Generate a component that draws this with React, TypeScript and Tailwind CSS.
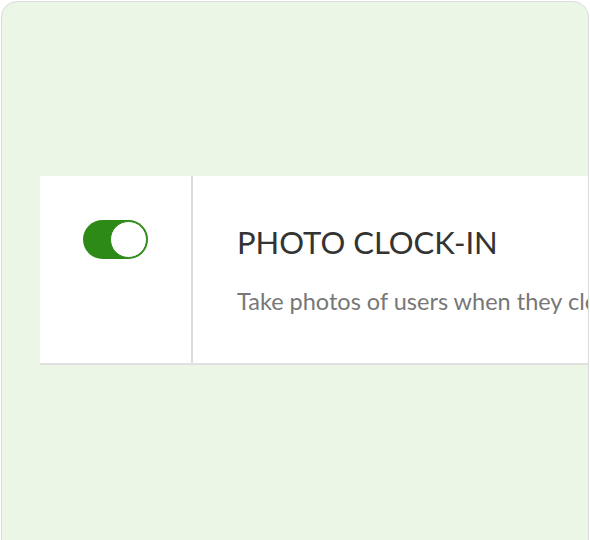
export default function App() {
  return (
    <div className="w-[590px] h-[540px] bg-white overflow-hidden" style={{ fontFamily: 'Lato, "Noto Sans", sans-serif' }}>
      <div className="ml-px mt-px w-[588px] h-[560px] border border-[#dcdcdc] rounded-[16px] bg-[#ecf6e7] overflow-hidden pt-[174px] pl-[38px]">
        <div className="flex w-[620px] bg-white border-b-2 border-[#e0e0e0] h-[189px]">
          <div className="w-[151px] shrink-0 flex justify-center pt-[44px]">
            <div className="w-[65px] h-[39px] rounded-full bg-[#2e8a17] flex items-center justify-end pr-px">
              <div className="w-[37px] h-[37px] rounded-full bg-white border-[1.5px] border-[#2e8a17]" />
            </div>
          </div>
          <div className="w-[2px] bg-[#dcdcdc] shrink-0" />
          <div className="pl-[44px] pt-[42px] whitespace-nowrap">
            <div className="text-[31px] leading-[48px] text-[#333333]">PHOTO CLOCK-IN</div>
            <div className="mt-[20px] text-[23.5px] leading-[30px] text-[#777777]">Take photos of users when they clock in and out</div>
          </div>
        </div>
      </div>
    </div>
  );
}
